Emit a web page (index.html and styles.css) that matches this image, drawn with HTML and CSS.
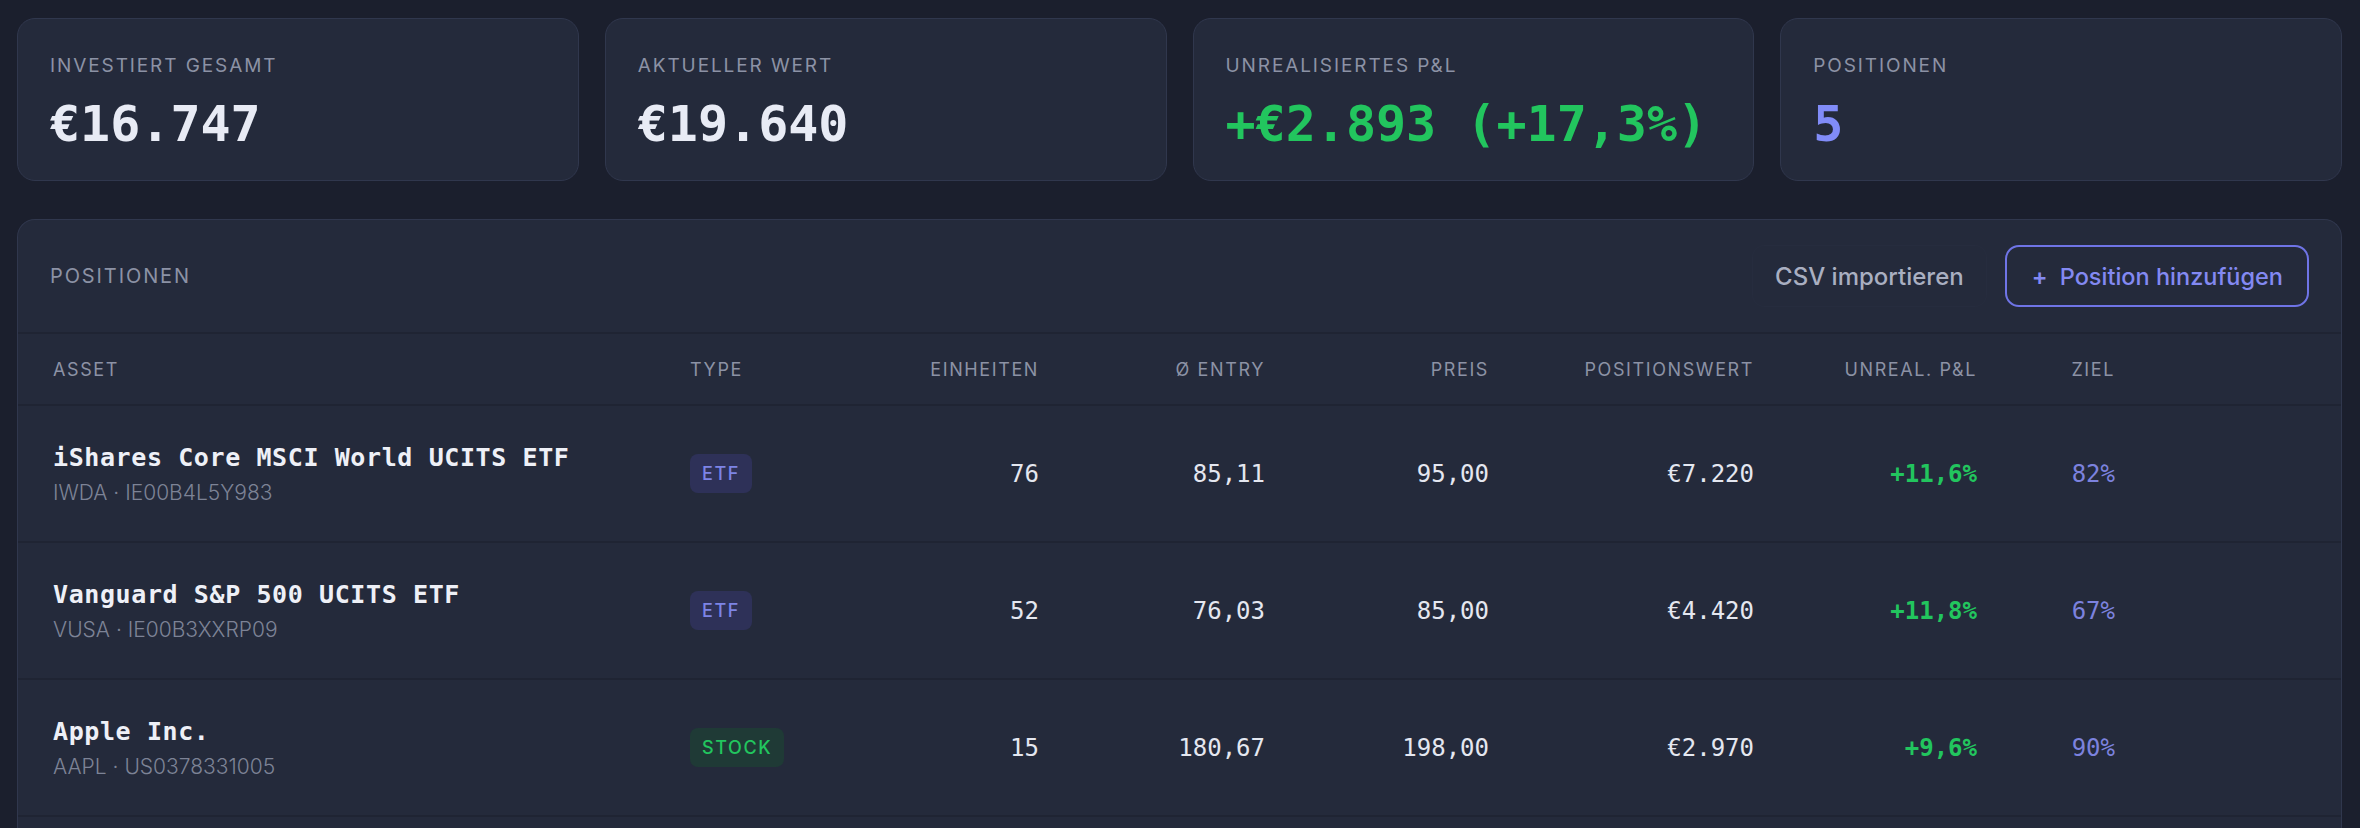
FILE: index.html
```html
<!DOCTYPE html>
<html lang="de">
<head>
    <meta charset="UTF-8">
    <meta name="viewport" content="width=device-width, initial-scale=1.0">
    <title>Portfolio</title>
    <link rel="stylesheet" href="styles.css">
</head>
<body>
    <!-- Summary cards -->
    <div class="stats">
        <div class="stat-card">
            <div class="stat-label">Investiert gesamt</div>
            <div class="stat-value">€16.747</div>
        </div>
        <div class="stat-card">
            <div class="stat-label">Aktueller Wert</div>
            <div class="stat-value">€19.640</div>
        </div>
        <div class="stat-card">
            <div class="stat-label">Unrealisiertes P&amp;L</div>
            <div class="stat-value positive">+€2.893 (+17,3%)</div>
        </div>
        <div class="stat-card">
            <div class="stat-label">Positionen</div>
            <div class="stat-value accent">5</div>
        </div>
    </div>

    <!-- Positions table -->
    <div class="panel">
        <div class="panel-header">
            <div class="panel-title">Positionen</div>
            <div class="panel-actions">
                <button class="btn-ghost">CSV importieren</button>
                <button class="btn-outline"><span class="plus">+</span> Position hinzufügen</button>
            </div>
        </div>

        <div class="row head">
            <div>Asset</div>
            <div>Type</div>
            <div class="num">Einheiten</div>
            <div class="num">Ø Entry</div>
            <div class="num">Preis</div>
            <div class="num">Positionswert</div>
            <div class="num">Unreal. P&amp;L</div>
            <div class="num">Ziel</div>
            <div></div>
        </div>

        <div class="row">
            <div class="asset">
                <div class="asset-name">iShares Core MSCI World UCITS ETF</div>
                <div class="asset-meta">IWDA · IE00B4L5Y983</div>
            </div>
            <div><span class="badge etf">ETF</span></div>
            <div class="num mono">76</div>
            <div class="num mono">85,11</div>
            <div class="num mono">95,00</div>
            <div class="num mono">€7.220</div>
            <div class="num mono pnl">+11,6%</div>
            <div class="num mono target">82%</div>
            <div></div>
        </div>

        <div class="row">
            <div class="asset">
                <div class="asset-name">Vanguard S&amp;P 500 UCITS ETF</div>
                <div class="asset-meta">VUSA · IE00B3XXRP09</div>
            </div>
            <div><span class="badge etf">ETF</span></div>
            <div class="num mono">52</div>
            <div class="num mono">76,03</div>
            <div class="num mono">85,00</div>
            <div class="num mono">€4.420</div>
            <div class="num mono pnl">+11,8%</div>
            <div class="num mono target">67%</div>
            <div></div>
        </div>

        <div class="row">
            <div class="asset">
                <div class="asset-name">Apple Inc.</div>
                <div class="asset-meta">AAPL · US0378331005</div>
            </div>
            <div><span class="badge stock">STOCK</span></div>
            <div class="num mono">15</div>
            <div class="num mono">180,67</div>
            <div class="num mono">198,00</div>
            <div class="num mono">€2.970</div>
            <div class="num mono pnl">+9,6%</div>
            <div class="num mono target">90%</div>
            <div></div>
        </div>
    </div>
</body>
</html>
```

FILE: styles.css
```css
/* Page */
body {
    margin: 0;
    padding: 18px 18px 0 17px;
    background-color: #1b1f2d;
    font-family: Inter, "Noto Sans", sans-serif;
    color: #e6e9f2;
    overflow: hidden;
}

/* Summary cards */
.stats {
    display: grid;
    grid-template-columns: repeat(4, 1fr);
    gap: 26px;
}

.stat-card {
    background-color: #242a3b;
    border: 1px solid #30374d;
    border-radius: 18px;
    height: 163px;
    box-sizing: border-box;
    padding: 36px 32px 0 32px;
}

.stat-label {
    font-size: 19px;
    font-weight: 400;
    letter-spacing: 1.9px;
    text-transform: uppercase;
    color: #8c92a5;
    line-height: 22px;
}

.stat-value {
    margin-top: 18px;
    font-family: "DejaVu Sans Mono", monospace;
    font-weight: 700;
    font-size: 50px;
    line-height: 58px;
    color: #e8ebf5;
}

.positive {
    color: #22c55e;
}

.accent {
    color: #818cf8;
}

/* Positions panel */
.panel {
    margin-top: 38px;
    min-height: 640px;
    background-color: #242a3b;
    border: 1px solid #30374d;
    border-bottom: none;
    border-radius: 18px 18px 0 0;
}

.panel-header {
    height: 112px;
    display: flex;
    align-items: center;
    justify-content: space-between;
    padding: 0 32px 0 32px;
    border-bottom: 2px solid #1f2433;
}

.panel-title {
    font-size: 20px;
    letter-spacing: 1.9px;
    text-transform: uppercase;
    color: #8c92a5;
}

.panel-actions {
    display: flex;
    align-items: center;
    gap: 18px;
}

.btn-ghost {
    height: 62px;
    padding: 0 22px;
    background: transparent;
    border: 1px solid #262c3e;
    border-radius: 12px;
    font-family: Inter, sans-serif;
    font-size: 24px;
    font-weight: 500;
    color: #a9afc1;
}

.btn-outline {
    height: 62px;
    padding: 0 24px 0 25px;
    background: transparent;
    border: 2px solid #6f74e6;
    border-radius: 14px;
    font-family: Inter, sans-serif;
    font-size: 23.5px;
    font-weight: 500;
    color: #8389f2;
}

.plus {
    font-weight: 600;
    margin-right: 6px;
}

/* Table rows */
.row {
    display: grid;
    grid-template-columns: 637px 149px 200px 226px 224px 265px 223px 138px 1fr;
    align-items: center;
    padding-left: 35px;
    height: 135px;
    border-bottom: 2px solid #1f2433;
}

.row.head {
    height: 70px;
    font-size: 18px;
    letter-spacing: 1.6px;
    text-transform: uppercase;
    color: #8c92a5;
}

.num {
    text-align: right;
}

.mono {
    font-family: "DejaVu Sans Mono", monospace;
    font-size: 24px;
    color: #e4e7f0;
}

.asset-name {
    font-family: "DejaVu Sans Mono", monospace;
    font-weight: 700;
    font-size: 25px;
    color: #eef0f7;
    letter-spacing: 0.6px;
}

.asset-meta {
    margin-top: 8px;
    font-size: 21px;
    font-weight: 300;
    color: #7d8396;
}

.pnl {
    font-weight: 700;
    color: #22c55e;
}

.target {
    color: #7c82de;
}

/* Type badges */
.badge {
    display: inline-block;
    padding: 9px 12px;
    border-radius: 8px;
    font-size: 18px;
    font-weight: 500;
    letter-spacing: 1.6px;
}

.badge.etf {
    background-color: #2e3158;
    color: #7d84e6;
}

.badge.stock {
    background-color: #1f3a36;
    color: #22c55e;
}
```
